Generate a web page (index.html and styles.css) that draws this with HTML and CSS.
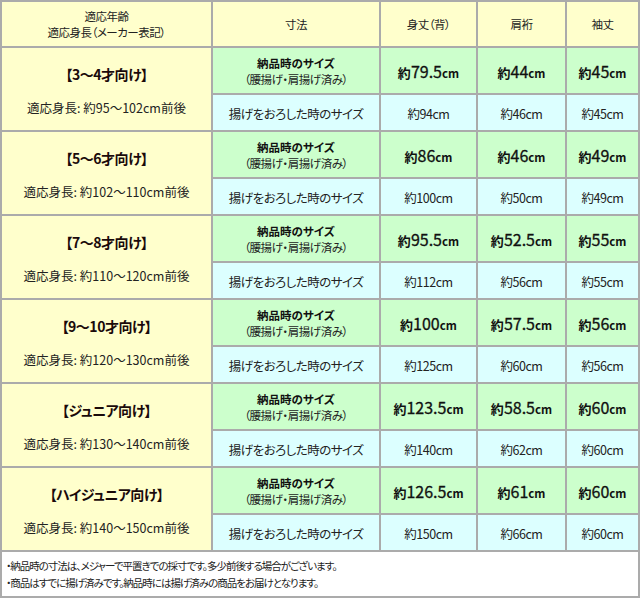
FILE: index.html
```html
<!DOCTYPE html>
<html lang="ja">
<head>
<meta charset="utf-8">
<title>サイズ表</title>
<link rel="stylesheet" href="styles.css">
</head>
<body>
<div class="sheet">
  <div class="cell head"><span class="line">適応年齢</span><span class="line">適応身長（メーカー表記）</span></div>
  <div class="cell head"><span class="line">寸法</span></div>
  <div class="cell head"><span class="line">身丈（背）</span></div>
  <div class="cell head"><span class="line">肩裄</span></div>
  <div class="cell head"><span class="line">袖丈</span></div>

  <div class="cell age"><span class="age-label">【3～4才向け】</span><span class="age-height">適応身長: 約95～102cm前後</span></div>
  <div class="cell fin"><span class="line strong">納品時のサイズ</span><span class="line">（腰揚げ・肩揚げ済み）</span></div>
  <div class="cell fin"><span class="val">約<span class="num">79.5</span><span class="unit">cm</span></span></div>
  <div class="cell fin"><span class="val">約<span class="num">44</span><span class="unit">cm</span></span></div>
  <div class="cell fin"><span class="val">約<span class="num">45</span><span class="unit">cm</span></span></div>
  <div class="cell raw"><span class="line">揚げをおろした時のサイズ</span></div>
  <div class="cell raw"><span class="line">約94cm</span></div>
  <div class="cell raw"><span class="line">約46cm</span></div>
  <div class="cell raw"><span class="line">約45cm</span></div>

  <div class="cell age"><span class="age-label">【5～6才向け】</span><span class="age-height">適応身長: 約102～110cm前後</span></div>
  <div class="cell fin"><span class="line strong">納品時のサイズ</span><span class="line">（腰揚げ・肩揚げ済み）</span></div>
  <div class="cell fin"><span class="val">約<span class="num">86</span><span class="unit">cm</span></span></div>
  <div class="cell fin"><span class="val">約<span class="num">46</span><span class="unit">cm</span></span></div>
  <div class="cell fin"><span class="val">約<span class="num">49</span><span class="unit">cm</span></span></div>
  <div class="cell raw"><span class="line">揚げをおろした時のサイズ</span></div>
  <div class="cell raw"><span class="line">約100cm</span></div>
  <div class="cell raw"><span class="line">約50cm</span></div>
  <div class="cell raw"><span class="line">約49cm</span></div>

  <div class="cell age"><span class="age-label">【7～8才向け】</span><span class="age-height">適応身長: 約110～120cm前後</span></div>
  <div class="cell fin"><span class="line strong">納品時のサイズ</span><span class="line">（腰揚げ・肩揚げ済み）</span></div>
  <div class="cell fin"><span class="val">約<span class="num">95.5</span><span class="unit">cm</span></span></div>
  <div class="cell fin"><span class="val">約<span class="num">52.5</span><span class="unit">cm</span></span></div>
  <div class="cell fin"><span class="val">約<span class="num">55</span><span class="unit">cm</span></span></div>
  <div class="cell raw"><span class="line">揚げをおろした時のサイズ</span></div>
  <div class="cell raw"><span class="line">約112cm</span></div>
  <div class="cell raw"><span class="line">約56cm</span></div>
  <div class="cell raw"><span class="line">約55cm</span></div>

  <div class="cell age"><span class="age-label">【9～10才向け】</span><span class="age-height">適応身長: 約120～130cm前後</span></div>
  <div class="cell fin"><span class="line strong">納品時のサイズ</span><span class="line">（腰揚げ・肩揚げ済み）</span></div>
  <div class="cell fin"><span class="val">約<span class="num">100</span><span class="unit">cm</span></span></div>
  <div class="cell fin"><span class="val">約<span class="num">57.5</span><span class="unit">cm</span></span></div>
  <div class="cell fin"><span class="val">約<span class="num">56</span><span class="unit">cm</span></span></div>
  <div class="cell raw"><span class="line">揚げをおろした時のサイズ</span></div>
  <div class="cell raw"><span class="line">約125cm</span></div>
  <div class="cell raw"><span class="line">約60cm</span></div>
  <div class="cell raw"><span class="line">約56cm</span></div>

  <div class="cell age"><span class="age-label">【ジュニア向け】</span><span class="age-height">適応身長: 約130～140cm前後</span></div>
  <div class="cell fin"><span class="line strong">納品時のサイズ</span><span class="line">（腰揚げ・肩揚げ済み）</span></div>
  <div class="cell fin"><span class="val">約<span class="num">123.5</span><span class="unit">cm</span></span></div>
  <div class="cell fin"><span class="val">約<span class="num">58.5</span><span class="unit">cm</span></span></div>
  <div class="cell fin"><span class="val">約<span class="num">60</span><span class="unit">cm</span></span></div>
  <div class="cell raw"><span class="line">揚げをおろした時のサイズ</span></div>
  <div class="cell raw"><span class="line">約140cm</span></div>
  <div class="cell raw"><span class="line">約62cm</span></div>
  <div class="cell raw"><span class="line">約60cm</span></div>

  <div class="cell age"><span class="age-label">【ハイジュニア向け】</span><span class="age-height">適応身長: 約140～150cm前後</span></div>
  <div class="cell fin"><span class="line strong">納品時のサイズ</span><span class="line">（腰揚げ・肩揚げ済み）</span></div>
  <div class="cell fin"><span class="val">約<span class="num">126.5</span><span class="unit">cm</span></span></div>
  <div class="cell fin"><span class="val">約<span class="num">61</span><span class="unit">cm</span></span></div>
  <div class="cell fin"><span class="val">約<span class="num">60</span><span class="unit">cm</span></span></div>
  <div class="cell raw"><span class="line">揚げをおろした時のサイズ</span></div>
  <div class="cell raw"><span class="line">約150cm</span></div>
  <div class="cell raw"><span class="line">約66cm</span></div>
  <div class="cell raw"><span class="line">約60cm</span></div>

  <div class="note">
    <p>・納品時の寸法は、メジャーで平置きでの採寸です。多少前後する場合がございます。</p>
    <p>・商品はすでに揚げ済みです。納品時には揚げ済みの商品をお届けとなります。</p>
  </div>
</div>
</body>
</html>
```
FILE: styles.css
```css
html, body {
  margin: 0;
  padding: 0;
  background: #ffffff;
}

body {
  font-family: "Noto Sans CJK JP", "Noto Sans", sans-serif;
  font-size: 12px;
  color: #222;
  font-feature-settings: "palt";
}

.sheet {
  width: 640px;
  box-sizing: border-box;
  display: grid;
  grid-template-columns: 209px 166px 95px 87px 71px;
  grid-template-rows: 44px repeat(6, 45px 35px) 44px;
  gap: 2px;
  padding: 2px;
  background: #ababab;
}

.cell {
  display: flex;
  flex-direction: column;
  align-items: center;
  justify-content: center;
  text-align: center;
  line-height: 16px;
  letter-spacing: -0.5px;
}

.line {
  display: block;
  white-space: nowrap;
}

.strong {
  font-weight: bold;
  color: #111;
  letter-spacing: 0;
}

.head {
  background: #ffffcc;
  font-size: 11.5px;
}

.age {
  grid-row: span 2;
  background: #ffffcc;
  gap: 18px;
  padding-top: 3px;
  letter-spacing: 0;
}

.age-label {
  display: block;
  font-size: 14px;
  font-weight: bold;
  color: #1a0a0a;
  letter-spacing: -0.5px;
}

.age-height {
  display: block;
  font-size: 12.5px;
}

.fin {
  background: #ccffcc;
  font-size: 11.5px;
}

.val {
  display: block;
  white-space: nowrap;
  font-weight: bold;
  font-size: 13px;
  color: #111;
  letter-spacing: 0;
  line-height: 20px;
  padding-top: 2px;
}

.num {
  font-size: 16px;
  font-weight: normal;
  -webkit-text-stroke: 0.3px #111;
}

.unit {
  font-size: 11.5px;
}

.raw {
  background: #dcffff;
  font-size: 12.5px;
  letter-spacing: -0.5px;
}

.raw .line {
  padding-top: 3px;
}

.note {
  grid-column: 1 / -1;
  background: #ffffff;
  display: flex;
  flex-direction: column;
  justify-content: center;
  padding-left: 4px;
  font-size: 10.5px;
  line-height: 17px;
  letter-spacing: -1px;
}

.note p {
  margin: 0;
  white-space: nowrap;
}
```
